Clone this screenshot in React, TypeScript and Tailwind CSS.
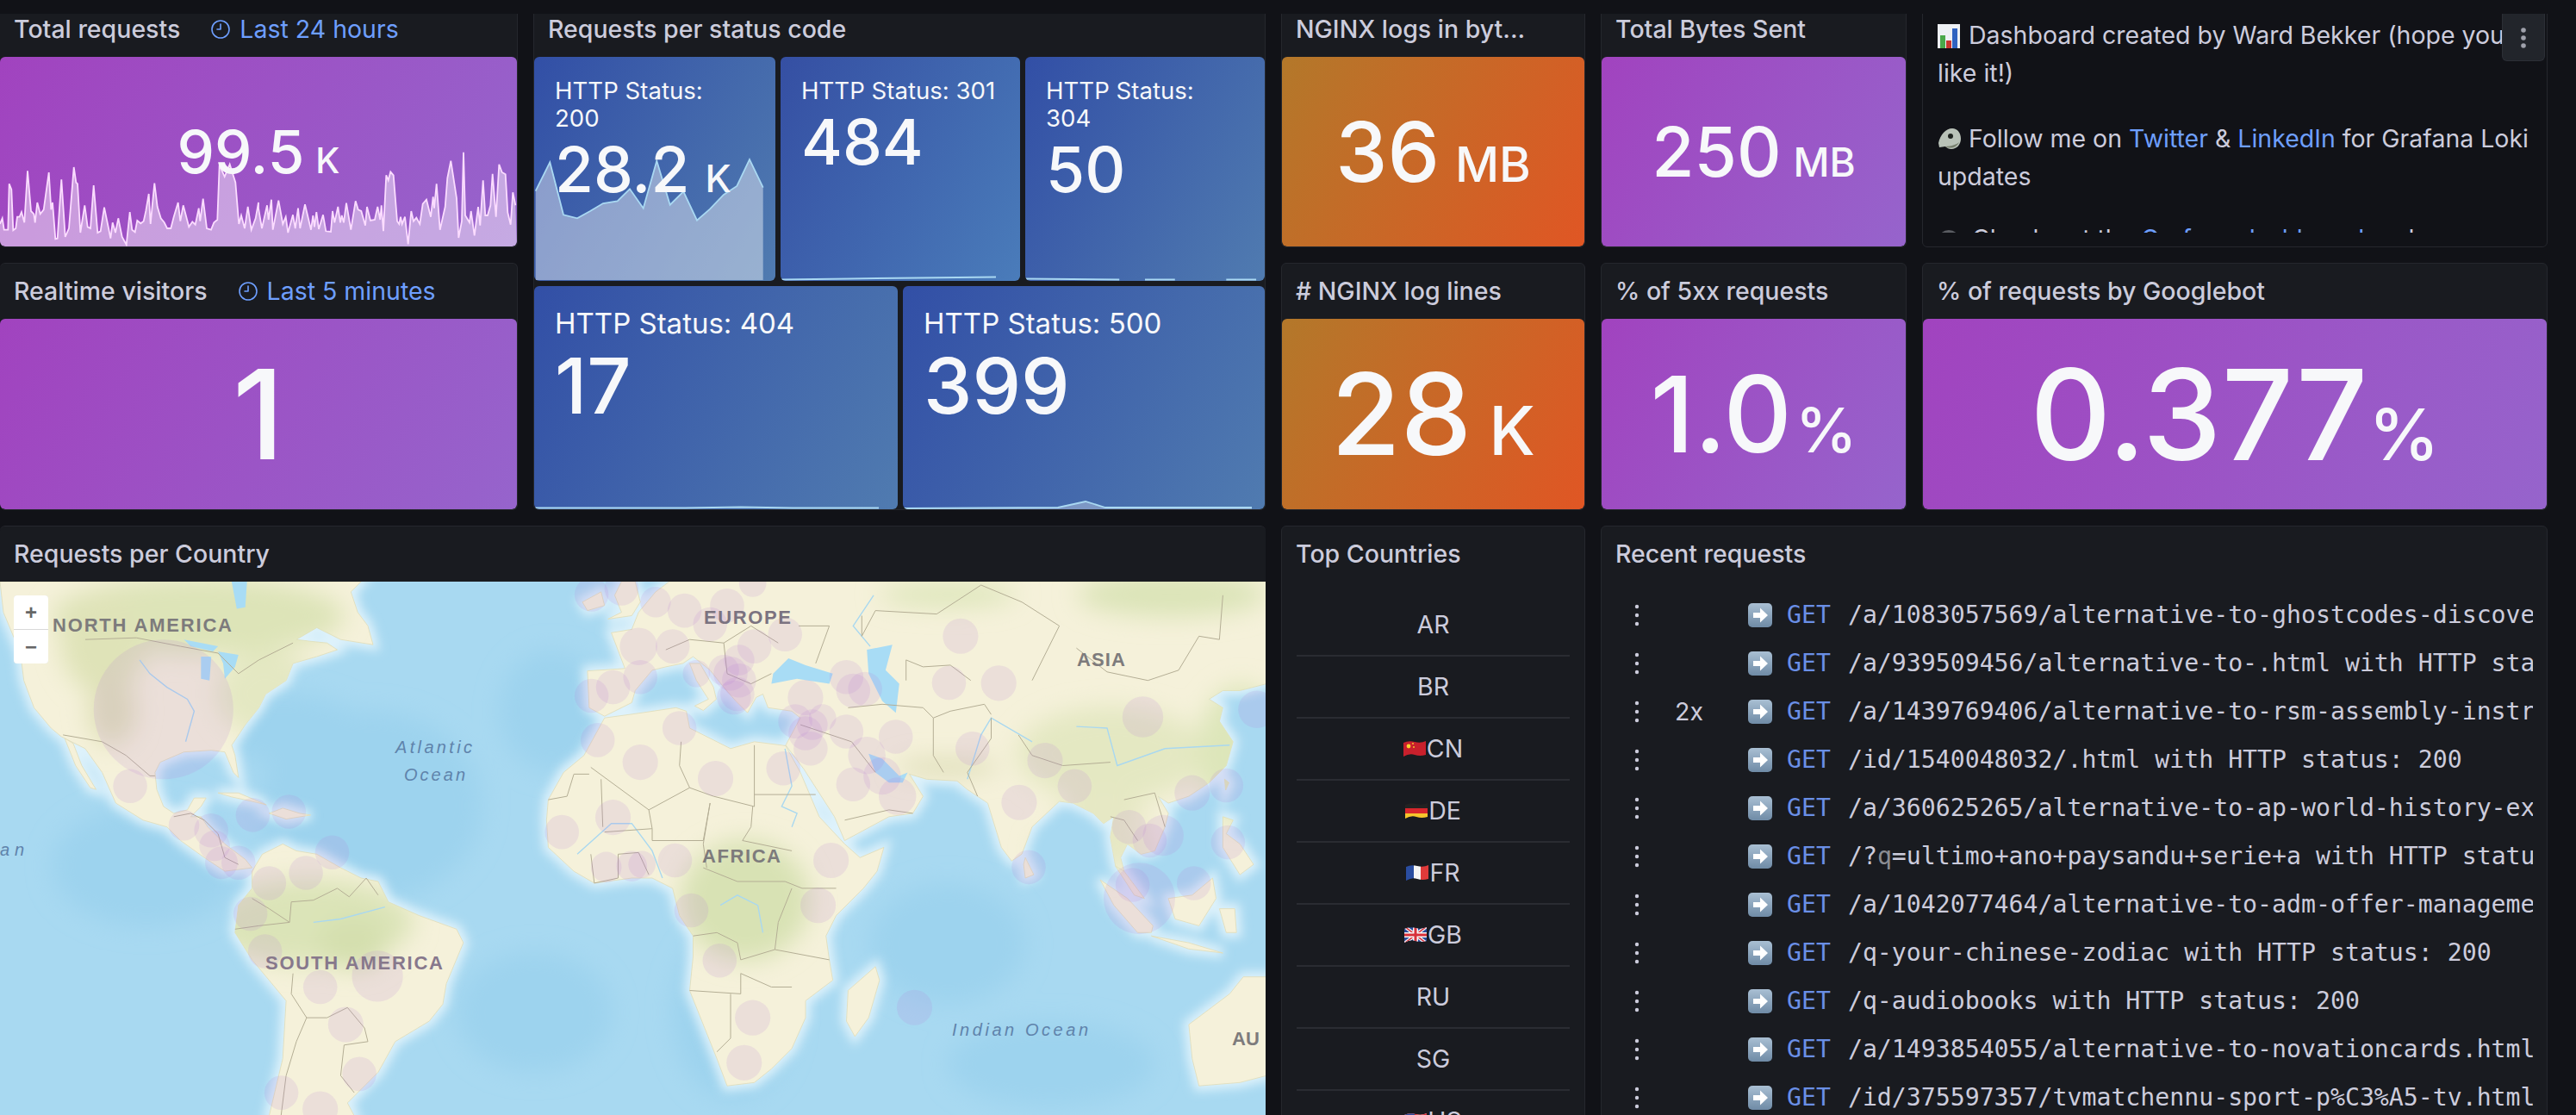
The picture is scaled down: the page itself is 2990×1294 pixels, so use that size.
import { Clock9 } from "lucide-react";
import type { ReactNode } from "react";

// Kart-koordinater er lest av fra tre utsnitt av kartet, derfor en forskyvning per utsnitt
const W = 0;
const M = 500;
const E = 850;

function p(off: number, s: string) {
    return s
        .trim()
        .split(/\s+/)
        .map((xy) => {
            const [x, y] = xy.split(",").map(Number);
            return `${(off + x / 2.529).toFixed(1)},${(y / 2.529).toFixed(1)}`;
        })
        .join(" ");
}

const land: [number, string][] = [
    [W, "0,0 10,90 60,210 70,290 100,370 150,430 180,455 250,490 300,560 340,650 420,700 490,720 530,760 600,810 660,850 740,840 720,815 660,770 610,720 590,690 560,690 590,660 605,635 570,635 550,670 510,680 480,660 460,610 455,560 470,530 540,500 620,495 660,500 685,560 700,575 690,510 680,480 720,420 760,370 780,330 840,290 860,240 930,220 990,200 960,180 910,175 870,170 930,135 1000,170 1095,185 1080,130 1050,90 1030,30 1060,0"],
    [W, "190,460 215,475 240,540 282,610 265,605 222,540"],
    [W, "740,850 770,800 830,770 870,790 930,800 1000,840 1060,870 1110,880 1140,940 1230,980 1340,1020 1360,1060 1310,1180 1300,1240 1260,1290 1160,1350 1110,1440 1050,1500 1020,1530 1040,1568 790,1568 830,1400 840,1230 790,1170 740,1110 690,1030 700,950 740,900"],
    [W, "640,620 700,620 782,655 740,645 680,632"],
    [W, "790,680 830,665 880,680 912,685 840,697"],
    [M, "510,400 620,385 720,370 750,380 760,430 800,450 880,490 950,470 1030,480 1042,482 1085,560 1140,690 1215,770 1260,810 1330,780 1310,850 1270,900 1190,980 1160,1040 1170,1110 1180,1170 1100,1230 1100,1280 1060,1370 1000,1430 950,1470 870,1480 840,1400 800,1300 760,1200 770,1100 770,1040 730,980 710,900 650,870 590,870 480,885 420,850 345,780 340,700 345,640 390,560 450,510"],
    [M, "700,0 660,30 610,90 590,140 530,150 570,255 460,262 465,370 510,395 590,355 600,320 650,260 690,250 740,240 770,220 820,260 860,310 895,350 930,385 955,340 975,330 990,370 1060,380 1085,400 1042,480 1095,550 1185,690 1215,760 1345,690 1415,680 1445,630 1405,565 1455,580 1545,585 1575,610 1635,650 1675,780 1705,820 1735,800 1765,720 1845,645 1885,650 1945,680 1975,710 2005,690 1995,750 2010,835 2035,850 2025,810 2045,770 2085,800 2125,790 2155,720 2165,680 2135,630 2165,650 2225,630 2285,590 2335,540 2355,470 2315,410 2325,370 2285,345 2325,320 2375,320 2453,300 2453,0"],
    [M, "760,240 790,240 830,310 838,345 800,378 775,365 815,345 780,290"],
    [M, "520,110 560,90 540,40 560,0 600,0 615,60 590,100"],
    [M, "445,60 500,30 510,70 460,85"],
    [E, "340,1200 420,1130 432,1170 400,1280 360,1335 335,1290"],
    [E, "860,810 885,860 860,870 855,830"],
    [E, "1080,875 1160,930 1235,1010 1230,1030 1190,1030 1120,950"],
    [E, "1125,835 1150,850 1210,930 1180,920"],
    [E, "1280,930 1350,920 1410,870 1420,930 1370,1010 1300,990"],
    [E, "1230,1040 1340,1060 1440,1090 1340,1078"],
    [E, "1430,960 1475,960 1480,1030 1450,1030"],
    [E, "1440,690 1470,700 1450,740 1490,770 1530,830 1490,860 1440,780"],
    [E, "1445,580 1458,590 1448,612"],
    [E, "1568,1160 1500,1160 1460,1210 1340,1300 1350,1400 1370,1480 1490,1470 1568,1450"],
];

const seas: [number, string][] = [
    [M, "1005,270 1050,225 1100,245 1180,270 1170,300 1075,285 1000,300"],
    [E, "395,200 470,185 450,260 490,300 480,385 440,350 400,270"],
    [E, "400,505 440,520 490,570 515,560 500,590 460,590 420,560"],
    [W, "680,0 725,0 720,75 695,80"],
    [W, "540,170 640,190 625,205 560,190"],
    [W, "590,220 620,220 615,290 590,285"],
    [W, "640,205 700,215 690,250 660,285 655,240"],
];

const borders: [number, string][] = [
    [W, "250,170 400,165 530,190 640,210 700,270 760,230 860,180"],
    [W, "185,450 300,470 370,510 440,570 455,570"],
    [W, "510,690 560,680 600,700 640,740 660,810 700,830"],
    [W, "740,930 790,960 850,1000 855,940 920,935 990,900 1025,925 1075,870 1110,920"],
    [W, "690,1020 760,1010 850,1000"],
    [W, "860,1150 855,1210 900,1280 960,1280 1020,1250 1070,1310"],
    [W, "900,1280 870,1350 840,1450 825,1568"],
    [W, "1070,1310 1080,1350 1010,1360 1000,1450 1040,1500"],
    [M, "470,545 640,670 760,605 830,630 950,660 950,480"],
    [M, "760,605 730,540 735,470"],
    [M, "500,580 505,720"],
    [M, "345,640 400,630 420,565 465,565"],
    [M, "640,670 650,725 510,735"],
    [M, "650,725 650,760 800,760 820,650"],
    [M, "820,650 800,770 810,840"],
    [M, "945,660 940,720 915,760 1060,790"],
    [M, "950,625 1130,625"],
    [M, "800,840 900,880 1040,880 1090,900 1190,900"],
    [M, "770,1040 840,1030 900,1060 910,1110 1010,1080 1170,1110"],
    [M, "760,1200 910,1210 910,1150 1000,1190 1060,1190"],
    [M, "880,1210 880,1340 840,1380"],
    [M, "470,800 480,885 550,870 550,800 610,795 640,860"],
    [M, "1010,1080 1020,1000 1060,900"],
    [M, "690,200 760,170 860,180 940,130 1020,180"],
    [M, "860,180 870,270 940,300 1000,270"],
    [M, "1080,130 1170,130 1130,240"],
    [E, "510,290 510,230 560,250 640,245 700,290"],
    [E, "380,100 380,160 420,85 600,95 730,10 850,60 960,130"],
    [E, "1010,195 1100,265 1220,290 1310,260 1370,160 1430,170 1440,40"],
    [E, "880,290 960,130"],
    [E, "590,400 640,380 740,360 760,390"],
    [E, "590,400 590,510 620,560"],
    [E, "340,370 440,360 560,370 590,400"],
    [E, "840,450 880,510 970,540 1110,530"],
    [E, "760,400 760,460 690,560 720,630"],
    [E, "330,700 460,670 530,680"],
    [E, "200,420 350,470 420,560"],
    [E, "1150,640 1240,620 1270,720"],
    [E, "1110,690 1150,700 1190,760"],
];

const rivers: [number, string][] = [
    [W, "410,230 440,270 490,310 550,345 570,380 545,470"],
    [W, "920,1000 1000,990 1130,955"],
    [M, "1040,490 1060,600 1030,660 1075,680 1060,720"],
    [M, "850,950 900,920 960,950 975,1030"],
    [M, "430,800 530,710 590,710 650,790 680,870"],
    [M, "1300,40 1240,130 1290,190"],
    [E, "1010,425 1100,430 1130,540 1270,490 1460,480"],
    [E, "690,580 730,450 760,400 880,470"],
];

const circles: [number, number, number, number][] = [
    [W, 480, 375, 205], [W, 382, 600, 50], [W, 540, 715, 45], [W, 620, 730, 50], [W, 630, 775, 45], [W, 650, 825, 48],
    [W, 700, 825, 50], [W, 742, 685, 50], [W, 848, 675, 50], [W, 975, 795, 50], [W, 790, 885, 50], [W, 898, 855, 50],
    [W, 735, 975, 50], [W, 778, 1085, 50], [W, 940, 1190, 50], [W, 1108, 1158, 75], [W, 1015, 1300, 52], [W, 1055, 1445, 50],
    [W, 826, 1500, 50], [W, 940, 1548, 52],
    [M, 472, 38, 50], [M, 560, 20, 50], [M, 660, 60, 45], [M, 745, 85, 50], [M, 870, 70, 50], [M, 945, 5, 40], [M, 610, 190, 55],
    [M, 710, 190, 50], [M, 820, 125, 50], [M, 950, 190, 50], [M, 1040, 155, 50], [M, 535, 310, 50], [M, 472, 335, 50], [M, 615, 280, 50],
    [M, 880, 270, 50], [M, 905, 290, 50], [M, 900, 330, 50], [M, 860, 260, 45], [M, 905, 230, 45], [M, 890, 340, 50], [M, 780, 270, 40],
    [M, 1100, 340, 52], [M, 1070, 410, 50], [M, 1100, 445, 50], [M, 1115, 490, 50], [M, 1120, 420, 45], [M, 1150, 400, 40],
    [M, 1220, 440, 50], [M, 1365, 455, 50], [M, 1220, 280, 50], [M, 1240, 320, 50], [M, 1275, 315, 50], [M, 1280, 510, 55],
    [M, 1240, 595, 50], [M, 1325, 570, 55], [M, 1370, 630, 55], [M, 1035, 548, 50], [M, 730, 430, 50], [M, 490, 465, 50],
    [M, 615, 530, 52], [M, 836, 578, 52], [M, 535, 692, 52], [M, 385, 735, 50], [M, 515, 838, 45], [M, 590, 835, 45], [M, 620, 830, 40],
    [M, 717, 818, 50], [M, 1175, 818, 52], [M, 1137, 950, 52], [M, 765, 965, 50], [M, 848, 1112, 50], [M, 945, 1280, 52], [M, 920, 1412, 52],
    [M, 1420, 1250, 52],
    [E, 670, 160, 52], [E, 636, 297, 50], [E, 782, 298, 52], [E, 705, 490, 50], [E, 918, 525, 52], [E, 842, 648, 52], [E, 1005, 600, 50],
    [E, 1205, 397, 60], [E, 1540, 375, 55], [E, 1350, 620, 52], [E, 1450, 598, 50], [E, 1165, 720, 50], [E, 1225, 760, 50], [E, 1265, 745, 60],
    [E, 1455, 765, 50], [E, 870, 838, 50], [E, 1175, 890, 50], [E, 1195, 930, 105], [E, 1355, 885, 50],
];

const greens: [number, number, number, number, string][] = [
    [230, 40, 170, 45, "#dde4b8"], [120, 70, 50, 60, "#dfe3b8"], [310, 130, 60, 50, "#e4e8c2"], [130, 150, 28, 40, "#dfe0b8"],
    [360, 395, 120, 50, "#dbe4b8"], [410, 420, 40, 30, "#d4dfae"], [865, 370, 75, 70, "#d8e2b4"], [780, 660, 70, 30, "#e6e8c4"],
    [1290, 200, 110, 55, "#e4e8c2"], [1360, 15, 110, 26, "#dbe4b8"], [1100, 15, 80, 14, "#dde6ba"], [1440, 200, 50, 80, "#dde6ba"],
    [1270, 310, 70, 25, "#e6e8c4"], [1280, 270, 50, 26, "#e6e8c4"], [1100, 215, 60, 8, "#d8d9b0"],
];

const deep: [number, number, number, number][] = [
    [430, 260, 130, 110], [330, 170, 90, 40], [640, 150, 60, 70], [620, 500, 90, 70], [1100, 420, 90, 70], [1220, 560, 120, 50], [850, 500, 70, 100], [170, 330, 110, 70],
];

const totalKurve = [
    "0,270 8,250 14,290 28,290 32,130 40,150 46,292 55,285 60,245 68,245 75,228 85,265 96,85 108,225 118,235 122,265 130,195 140,235 152,220 170,90 178,220 183,195 193,322 200,320 214,115 227,315 240,285 257,72 265,125 270,130 280,300 295,205 305,280 315,285 326,135 340,300 350,295 363,212 380,295 385,320 392,265 402,300 412,250 425,315 440,342 452,228 460,290 470,298 478,258 490,268 500,260 508,225 518,165 524,270 538,128 548,210 560,250 572,265 582,285 595,285 605,245 620,195 628,260 638,205 658,280 670,262 680,272 692,215 697,260 707,182 720,285 735,290 745,265 757,255 764,65 782,105 800,62 820,125 832,270 840,240 852,285 863,210 875,290 890,250 900,195",
    "900,215 912,285 930,205 935,255 945,185 950,290 970,188 985,270 995,245 1003,300 1020,238 1028,285 1038,215 1045,285 1062,202 1083,290 1090,240 1095,280 1102,228 1110,288 1125,238 1135,295 1152,297 1158,225 1165,265 1177,210 1185,265 1190,240 1197,265 1206,197 1222,290 1238,190 1247,220 1258,225 1272,275 1278,210 1290,258 1305,255 1315,210 1324,255 1328,205 1335,295 1345,100 1352,118 1360,88 1370,100 1383,260 1390,270 1395,245 1400,270 1410,245 1421,340 1432,225 1440,260 1450,248 1462,270 1472,200 1485,185 1500,245 1508,175 1512,215 1520,130 1532,290 1550,210 1558,110 1570,50 1590,180 1597,318 1608,260 1614,20 1620,240 1635,265 1640,225 1652,310 1665,210 1672,275 1682,118 1690,240 1698,240 1708,205 1715,95 1727,245 1738,62 1748,90 1760,97 1768,230 1778,272 1786,160 1795,205",
]
    .join(" ")
    .split(" ")
    .map((xy) => {
        const [x, y] = xy.split(",").map(Number);
        return `${(x / 3).toFixed(1)},${(104 + y / 3).toFixed(1)}`;
    })
    .join(" ");

const status200 = "5,155 55,55 102,238 150,250 195,225 240,198 290,190 333,148 380,215 427,50 473,203 520,157 567,257 612,218 660,168 706,138 750,45 797,143"
    .split(" ")
    .map((xy) => {
        const [x, y] = xy.split(",").map(Number);
        return `${(x / 3).toFixed(1)},${(104 + y / 3).toFixed(1)}`;
    })
    .join(" ");

const requests = [
    { count: "", path: "/a/1083057569/alternative-to-ghostcodes-discover.html with HTTP status: 200" },
    { count: "", path: "/a/939509456/alternative-to-.html with HTTP status: 200" },
    { count: "2x", path: "/a/1439769406/alternative-to-rsm-assembly-instruction.html with HTTP status: 200" },
    { count: "", path: "/id/1540048032/.html with HTTP status: 200" },
    { count: "", path: "/a/360625265/alternative-to-ap-world-history-exam.html with HTTP status: 200" },
    { count: "", path: "q" },
    { count: "", path: "/a/1042077464/alternative-to-adm-offer-management.html with HTTP status: 200" },
    { count: "", path: "/q-your-chinese-zodiac with HTTP status: 200" },
    { count: "", path: "/q-audiobooks with HTTP status: 200" },
    { count: "", path: "/a/1493854055/alternative-to-novationcards.html with HTTP status: 200" },
    { count: "", path: "/id/375597357/tvmatchennu-sport-p%C3%A5-tv.html with HTTP status: 200" },
];

const lilla = "bg-[linear-gradient(120deg,#a143bf,#9664cc)]";
const oransje = "bg-[linear-gradient(120deg,#b3782a,#e05624)]";
const bla = "bg-[linear-gradient(120deg,#324fa6,#507bb0)]";
const bla301 = "bg-[linear-gradient(120deg,#354fa3,#4a7cba)]";

function Panel({ title, tag, className, children }: { title: string; tag?: string; className?: string; children: ReactNode }) {
    return (
        <section className={"flex flex-col min-h-0 overflow-hidden rounded-md border border-[#25272d] bg-[#191b20] " + (className ?? "")}>
            <header className="flex h-16 shrink-0 items-center gap-[35px] pl-4 text-[28.5px] font-medium text-[#ccccdc]">
                <span className="whitespace-nowrap">{title}</span>
                {tag && (
                    <span className="flex items-center gap-[10px] font-normal text-[#6e9fff]">
                        <Clock9 size={24} strokeWidth={1.6} />
                        {tag}
                    </span>
                )}
            </header>
            {children}
        </section>
    );
}

function Stat({ value, unit, bg, valueClass, unitClass, children }: { value: string; unit?: string; bg: string; valueClass: string; unitClass?: string; children?: ReactNode }) {
    return (
        <div className={"relative flex flex-1 items-center justify-center overflow-hidden rounded-md font-medium text-[#f7f8fa] " + bg}>
            {children}
            <div className="relative flex items-baseline leading-none">
                <span className={valueClass}>{value}</span>
                {unit && <span className={unitClass}>{unit}</span>}
            </div>
        </div>
    );
}

function StatusTile({ title, value, unit, big, bg, className, children }: { title: string; value: string; unit?: string; big?: boolean; bg: string; className: string; children?: ReactNode }) {
    return (
        <div className={"relative overflow-hidden rounded-md pl-[24px] text-[#f7f8fa] " + bg + " " + className}>
            {children}
            <div className={big ? "relative pt-[24px] text-[33px] leading-[38px]" : "relative pt-[23px] text-[27.6px] leading-[32px]"}>{title}</div>
            <div className={big ? "relative text-[90px] font-medium leading-[1.2]" : "relative text-[73px] font-medium leading-[1.2]"}>
                {value}
                {unit && <span className="ml-[18px] text-[44px]">{unit}</span>}
            </div>
        </div>
    );
}

function TileLine({ w, h, points }: { w: number; h: number; points: string }) {
    return (
        <svg className="absolute inset-0 h-full w-full" viewBox={`0 0 ${w} ${h}`} preserveAspectRatio="none">
            <polyline points={points} fill="none" stroke="#a9d8f2" strokeWidth="2" />
        </svg>
    );
}

function WorldMap() {
    return (
        <div className="relative min-h-0 flex-1 overflow-hidden bg-[#a8d9f1]">
            <svg className="block" width="1469" height="620" viewBox="0 0 1469 620">
                <defs>
                    <filter id="blur12"><feGaussianBlur stdDeviation="14" /></filter>
                    <filter id="blur6"><feGaussianBlur stdDeviation="6" /></filter>
                    <filter id="blur1"><feGaussianBlur stdDeviation="0.5" /></filter>
                    <clipPath id="landClip">
                        {land.map(([o, s], i) => <polygon key={i} points={p(o, s)} />)}
                    </clipPath>
                </defs>
                <g filter="url(#blur12)">
                    {deep.map(([x, y, rx, ry], i) => <ellipse key={i} cx={x} cy={y} rx={rx} ry={ry} fill="#9dd3ee" />)}
                </g>
                <g filter="url(#blur6)">
                    {land.map(([o, s], i) => <polygon key={i} points={p(o, s)} fill="#def2fb" stroke="#def2fb" strokeWidth="12" />)}
                </g>
                <g filter="url(#blur1)">
                    {land.map(([o, s], i) => <polygon key={i} points={p(o, s)} fill="#f5f1da" stroke="#dfdcb8" strokeWidth="0.8" />)}
                </g>
                <g clipPath="url(#landClip)">
                    <g filter="url(#blur12)">
                        {greens.map(([x, y, rx, ry, c], i) => <ellipse key={i} cx={x} cy={y} rx={rx} ry={ry} fill={c} />)}
                    </g>
                </g>
                {seas.map(([o, s], i) => <polygon key={i} points={p(o, s)} fill="#a8dcf5" />)}
                <g fill="none" filter="url(#blur1)">
                    {rivers.map(([o, s], i) => <polyline key={i} points={p(o, s)} stroke="#a9d8f0" strokeWidth="1.4" />)}
                    {borders.map(([o, s], i) => <polyline key={i} points={p(o, s)} stroke="#b4ae95" strokeWidth="1" />)}
                </g>
                {circles.map(([o, x, y, r], i) => (
                    <circle key={i} cx={o + x / 2.529} cy={y / 2.529} r={r / 2.529} fill="#b877d9" fillOpacity="0.15" />
                ))}
                <g fontFamily="'Liberation Sans', sans-serif" fontWeight="700" fontSize="22" fill="#7d7b7c">
                    <text x="61" y="58" textLength="208">NORTH AMERICA</text>
                    <text x="308" y="450" textLength="206" fill="#87788c">SOUTH AMERICA</text>
                    <text x="817" y="49" textLength="101" fill="#7b7380">EUROPE</text>
                    <text x="815" y="326" textLength="91">AFRICA</text>
                    <text x="1250" y="98" textLength="56">ASIA</text>
                    <text x="1430" y="538">AU</text>
                </g>
                <g fontFamily="'Liberation Sans', sans-serif" fontStyle="italic" fontSize="20" fill="#5f83ab">
                    <text x="459" y="199" textLength="89">Atlantic</text>
                    <text x="469" y="231" textLength="71">Ocean</text>
                    <text x="0" y="318" textLength="28">an</text>
                    <text x="1105" y="527" textLength="158">Indian Ocean</text>
                </g>
            </svg>
            <div className="absolute left-4 top-4 flex w-10 flex-col gap-px overflow-hidden rounded bg-[#d9d9d9] text-center font-['Liberation_Sans',sans-serif] text-[24px] font-bold leading-[39px] text-[#666]">
                <span className="h-[39px] bg-white">+</span>
                <span className="h-[39px] bg-white">−</span>
            </div>
        </div>
    );
}

function Flag({ id, children }: { id: string; children: ReactNode }) {
    return (
        <svg width="26" height="20" viewBox="0 0 26 20" className="mr-px shrink-0">
            <clipPath id={id}>
                <path d="M0 3Q6 0 13 2T26 1V17Q19 19 13 17T0 19Z" />
            </clipPath>
            <g clipPath={`url(#${id})`}>{children}</g>
        </svg>
    );
}

const flags: Record<string, ReactNode> = {
    CN: (
        <Flag id="cn">
            <rect width="26" height="20" fill="#c8202c" />
            <circle cx="6" cy="7" r="2.4" fill="#f7d42d" />
            <circle cx="11" cy="4" r="0.9" fill="#f7d42d" />
            <circle cx="12" cy="8" r="0.9" fill="#f7d42d" />
        </Flag>
    ),
    DE: (
        <Flag id="de">
            <rect width="26" height="7" fill="#222" />
            <rect y="7" width="26" height="6" fill="#d8262c" />
            <rect y="13" width="26" height="7" fill="#f5c52c" />
        </Flag>
    ),
    FR: (
        <Flag id="fr">
            <rect width="9" height="20" fill="#2a4da0" />
            <rect x="9" width="8" height="20" fill="#f5f5f5" />
            <rect x="17" width="9" height="20" fill="#df3a3a" />
        </Flag>
    ),
    GB: (
        <Flag id="gb">
            <rect width="26" height="20" fill="#2b4b9b" />
            <path d="M0 0L26 20M26 0L0 20" stroke="#f5f5f5" strokeWidth="4" />
            <path d="M0 0L26 20M26 0L0 20" stroke="#d8303a" strokeWidth="1.5" />
            <path d="M13 0V20M0 10H26" stroke="#f5f5f5" strokeWidth="6" />
            <path d="M13 0V20M0 10H26" stroke="#d8303a" strokeWidth="3" />
        </Flag>
    ),
    US: (
        <Flag id="us">
            <rect width="26" height="20" fill="#f5f5f5" />
            <path d="M0 2H26M0 7H26M0 12H26M0 17H26" stroke="#d8303a" strokeWidth="2.5" />
            <rect width="12" height="10" fill="#2b4b9b" />
        </Flag>
    ),
};

function Dots() {
    return (
        <svg width="6" height="26" viewBox="0 0 6 26" fill="#ccccdc" className="shrink-0">
            <circle cx="3" cy="3" r="2.2" />
            <circle cx="3" cy="13" r="2.2" />
            <circle cx="3" cy="23" r="2.2" />
        </svg>
    );
}

function Arrow() {
    return (
        <svg width="28" height="28" viewBox="0 0 28 28" className="shrink-0">
            <rect width="28" height="28" rx="5" fill="url(#arrowBg)" />
            <path d="M6 11h8V5.500L23 14l-9 8.500V17H6z" fill="#fff" />
        </svg>
    );
}

export default function App() {
    const country = ["AR", "BR", "CN", "DE", "FR", "GB", "RU", "SG", "US"];

    return (
        <div className="relative h-[1294px] w-[2990px] overflow-hidden bg-[#111217] font-['Inter',sans-serif]">
            <svg className="absolute h-0 w-0">
                <defs>
                    <linearGradient id="arrowBg" x1="0" y1="0" x2="0" y2="1">
                        <stop offset="0" stopColor="#a9bfd3" />
                        <stop offset="1" stopColor="#6f8ba6" />
                    </linearGradient>
                </defs>
            </svg>

            <div className="grid grid-cols-[601px_850px_353px_355px_726px] grid-rows-[286px_287px_700px] gap-x-[18px] gap-y-[18px] pt-px">
                <Panel title="Total requests" tag="Last 24 hours" className="border-l-0">
                    <Stat value="99.5" unit="K" bg={lilla} valueClass="text-[69px]" unitClass="ml-[13px] text-[41px]">
                        <svg className="absolute inset-0" width="600" height="220" viewBox="0 0 600 220">
                            <polygon points={`0,220 ${totalKurve} 600,220`} fill="#fff" fillOpacity="0.45" />
                            <polyline points={totalKurve} fill="none" stroke="#fbdcff" strokeWidth="1.8" />
                        </svg>
                    </Stat>
                </Panel>

                <Panel title="Requests per status code" className="row-span-2 !overflow-visible">
                    <div className="flex min-h-0 flex-1 flex-col gap-[6px]">
                        <div className="flex flex-1 gap-[6px]">
                            <StatusTile title="HTTP Status: 200" value="28.2" unit="K" bg={bla} className="w-[280px] pr-[40px]">
                                <svg className="absolute inset-0" width="280" height="259" viewBox="0 0 280 259">
                                    <polygon points={`1.7,259 ${status200} 265.700,259`} fill="#fff" fillOpacity="0.42" />
                                    <polyline points={status200} fill="none" stroke="#a9d8f2" strokeWidth="1.800" />
                                </svg>
                            </StatusTile>
                            <StatusTile title="HTTP Status: 301" value="484" bg={bla301} className="w-[278px]">
                                <TileLine w={278} h={259} points="0,258 80,257 160,256 250,255" />
                            </StatusTile>
                            <StatusTile title="HTTP Status: 304" value="50" bg={bla} className="flex-1 pr-[40px]">
                                <TileLine w={280} h={259} points="0,257 110,258" />
                                <TileLine w={280} h={259} points="140,258 175,258" />
                                <TileLine w={280} h={259} points="235,258 270,258" />
                            </StatusTile>
                        </div>
                        <div className="flex flex-1 gap-[6px]">
                            <StatusTile title="HTTP Status: 404" value="17" big bg={bla} className="w-[422px]">
                                <TileLine w={422} h={259} points="0,257 25,257 120,257 175,257 240,256 300,257 400,257" />
                            </StatusTile>
                            <StatusTile title="HTTP Status: 500" value="399" big bg={bla} className="flex-1">
                                <svg className="absolute inset-0" width="422" height="259" viewBox="0 0 422 259">
                                    <polygon points="0,258 180,257 212,250 235,257 405,257 405,259 0,259" fill="#fff" fillOpacity="0.3" />
                                    <polyline points="0,258 180,257 212,250 235,257 405,257" fill="none" stroke="#a9d8f2" strokeWidth="1.800" />
                                </svg>
                            </StatusTile>
                        </div>
                    </div>
                </Panel>

                <Panel title="NGINX logs in byt...">
                    <Stat value="36" unit="MB" bg={oransje} valueClass="text-[96px]" unitClass="ml-[18px] text-[56px]" />
                </Panel>

                <Panel title="Total Bytes Sent">
                    <Stat value="250" unit="MB" bg={lilla} valueClass="text-[80px]" unitClass="ml-[14px] text-[46px]" />
                </Panel>

                <section className="relative overflow-hidden rounded-md border border-[#25272d] bg-[#111217]">
                    <div className="h-[268px] overflow-hidden pl-[17px] pr-[17px] pt-[17px] text-[28.5px] leading-[44px] text-[#ccccdc]">
                        <p className="mb-[32px]">
                            <svg width="26" height="28" viewBox="0 0 26 28" className="mr-[10px] inline-block align-[-5px]">
                                <rect width="26" height="28" fill="#eef0f4" />
                                <rect x="3" y="13" width="6" height="15" fill="#4aa84a" />
                                <rect x="10" y="19" width="6" height="9" fill="#c8362f" />
                                <rect x="17" y="5" width="6" height="23" fill="#2f62c0" />
                            </svg>
                            Dashboard created by Ward Bekker (hope you like it!)
                        </p>
                        <p className="mb-[28px]">
                            <svg width="28" height="28" viewBox="0 0 28 28" className="mr-[8px] inline-block align-[-5px]">
                                <path d="M1 18C3 8 10 1 17 1c6 0 10 5 10 12 0 7-5 12-11 12-3 0-5-1-7-3l-7 1z" fill="#b9c2b8" />
                                <path d="M9 22c5 3 13 2 16-5-2 2-9 5-16 5z" fill="#78806f" />
                                <circle cx="15" cy="10" r="3" fill="#1f2420" />
                            </svg>
                            Follow me on <a className="text-[#6e9fff]">Twitter</a> &amp; <a className="text-[#6e9fff]">LinkedIn</a> for Grafana Loki updates
                        </p>
                        <p>
                            <span className="mr-[14px] inline-block h-[24px] w-[26px] rounded-t-full bg-[#5a5c62] align-[-4px]" />
                            Check out the <a className="text-[#6e9fff]">Grafana dashboard</a> and more
                        </p>
                    </div>
                    <div className="absolute right-[2px] top-0 flex h-[69px] w-[50px] items-center justify-center rounded-b-md border border-t-0 border-[#2c2f36] bg-[#22252b] pt-[16px]">
                        <svg width="6" height="24" viewBox="0 0 6 24" fill="#9fa1ab">
                            <circle cx="3" cy="3" r="2.8" />
                            <circle cx="3" cy="12" r="2.8" />
                            <circle cx="3" cy="21" r="2.8" />
                        </svg>
                    </div>
                </section>

                <Panel title="Realtime visitors" tag="Last 5 minutes" className="border-l-0">
                    <Stat value="1" bg={lilla} valueClass="text-[144px]" />
                </Panel>

                <Panel title="# NGINX log lines">
                    <Stat value="28" unit="K" bg={oransje} valueClass="text-[131px]" unitClass="ml-[20px] text-[78px]" />
                </Panel>

                <Panel title="% of 5xx requests">
                    <Stat value="1.0" unit="%" bg={lilla} valueClass="text-[123px]" unitClass="ml-[4px] text-[72px]" />
                </Panel>

                <Panel title="% of requests by Googlebot">
                    <Stat value="0.377" unit="%" bg={lilla} valueClass="text-[146px]" unitClass="ml-[1px] text-[83px]" />
                </Panel>

                <Panel title="Requests per Country" className="col-span-2 border-x-0">
                    <WorldMap />
                </Panel>

                <Panel title="Top Countries">
                    <div className="mx-[17px] pt-[15px] text-[28.5px] text-[#ccccdc]">
                        {country.map((c) => (
                            <div key={c} className="flex h-[72px] items-center justify-center border-b-2 border-[#2a2c32]">
                                {flags[c]}
                                {c}
                            </div>
                        ))}
                    </div>
                </Panel>

                <Panel title="Recent requests" className="col-span-2">
                    <div className="pt-[11px] pl-[38px] pr-[16px] text-[#ccccdc]">
                        {requests.map((r, i) => (
                            <div key={i} className="flex h-14 items-center">
                                <Dots />
                                <span className="ml-[41px] w-[85px] shrink-0 text-[28.5px]">{r.count}</span>
                                <Arrow />
                                <div className="ml-[17px] min-w-0 flex-1 overflow-hidden whitespace-nowrap font-['DejaVu_Sans_Mono',monospace] text-[28.2px]">
                                    <span className="text-[#6a8fe6]">GET</span>
                                    <span className="ml-[20px]">
                                        {r.path === "q" ? (
                                            <>/?<span className="text-[#8b8d93]">q</span>=ultimo+ano+paysandu+serie+a with HTTP status: 200</>
                                        ) : r.path}
                                    </span>
                                </div>
                            </div>
                        ))}
                    </div>
                </Panel>
            </div>

            <div className="absolute inset-x-0 top-0 h-4 bg-[#111217]" />
        </div>
    );
}
